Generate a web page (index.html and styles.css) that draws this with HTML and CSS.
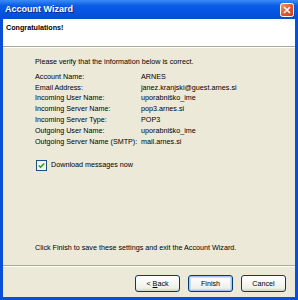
FILE: index.html
```html
<!DOCTYPE html>
<html lang="en">
<head>
    <meta charset="UTF-8">
    <title>Account Wizard</title>
    <link rel="stylesheet" href="styles.css">
</head>
<body>

<div class="window">
    <div class="titlebar">
        <span class="title">Account Wizard</span>
        <svg class="close" width="14" height="14" viewBox="0 0 14 14">
            <defs>
                <linearGradient id="closeFill" x1="0" y1="0" x2="1" y2="1">
                    <stop offset="0" stop-color="#f4a07c"/>
                    <stop offset="0.5" stop-color="#e2582f"/>
                    <stop offset="1" stop-color="#c9401a"/>
                </linearGradient>
            </defs>
            <rect x="0.5" y="0.5" width="13" height="13" rx="2" fill="url(#closeFill)" stroke="#fff"/>
            <path d="M4 4 L10 10 M10 4 L4 10" stroke="#fff" stroke-width="1.6"/>
        </svg>
    </div>

    <div class="frame">
        <!-- Header -->
        <div class="header">Congratulations!</div>

        <!-- Summary -->
        <div class="content">
            <p class="intro">Please verify that the information below is correct.</p>
            <div class="summary">
                <span>Account Name:</span><span>ARNES</span>
                <span>Email Address:</span><span>janez.kranjski@guest.arnes.si</span>
                <span>Incoming User Name:</span><span>uporabniško_ime</span>
                <span>Incoming Server Name:</span><span>pop3.arnes.si</span>
                <span>Incoming Server Type:</span><span>POP3</span>
                <span>Outgoing User Name:</span><span>uporabniško_ime</span>
                <span>Outgoing Server Name (SMTP):</span><span>mail.arnes.si</span>
            </div>
            <label class="check">
                <svg class="box" width="11" height="11" viewBox="0 0 11 11">
                    <rect x="0.5" y="0.5" width="10" height="10" fill="#f4f4ef" stroke="#1c5180"/>
                    <path d="M2.8 5.5 L4.6 7.3 L8.2 3.6" fill="none" stroke="#21a121" stroke-width="1.5"/>
                </svg>
                Download messages now
            </label>
            <p class="finish-note">Click Finish to save these settings and exit the Account Wizard.</p>
        </div>

        <!-- Buttons -->
        <div class="buttons">
            <button>&lt; <u>B</u>ack</button>
            <button class="default">Finish</button>
            <button>Cancel</button>
        </div>
    </div>
</div>

</body>
</html>
```

FILE: styles.css
```css
body {
    margin: 0;
    padding: 0;
    font-family: "Liberation Sans", Arial, sans-serif;
    font-size: 7.2px;
    line-height: 10.8px;
    color: #000;
}
.window {
    width: 298px;
    height: 300px;
    display: flex;
    flex-direction: column;
    background-color: #0a4fd8;
}
.titlebar {
    height: 19px;
    display: flex;
    align-items: center;
    justify-content: space-between;
    padding: 0 4px 0 5px;
    background: linear-gradient(#3a8cf8, #0a5ce6 30%, #0553e0 70%, #0a4bd0);
}
.title {
    color: white;
    font-weight: bold;
    font-size: 9px;
    text-shadow: 1px 1px 0 #0a2a8a;
}
.close {
    display: block;
}
.frame {
    flex: 1;
    display: flex;
    flex-direction: column;
    margin: 0 3px 3px 3px;
    background-color: #ece9d8;
}
.header {
    height: 28px;
    padding: 4px 0 0 3px;
    box-sizing: border-box;
    background-color: white;
    font-weight: bold;
    border-bottom: 1px solid #aca899;
}
.content {
    flex: 1;
    display: flex;
    flex-direction: column;
    padding: 9px 0 0 32px;
    border-top: 1px solid white;
}
.intro {
    margin: 0 0 4px 0;
}
.summary {
    display: grid;
    grid-template-columns: 106px auto;
}
.check {
    display: flex;
    align-items: center;
    gap: 4px;
    margin: 13px 0 0 1px;
}
.box {
    display: block;
}
.finish-note {
    margin: auto 0 11px 0;
}
.buttons {
    display: flex;
    justify-content: flex-end;
    gap: 8px;
    padding: 9px 9px 5px 0;
    border-top: 1px solid #aca899;
    box-shadow: inset 0 1px 0 white;
}
.buttons button {
    width: 45px;
    height: 17px;
    padding: 0;
    font-family: inherit;
    font-size: 7.2px;
    color: #000;
    background: linear-gradient(#fff, #f0f0ea 80%, #d6d0c5);
    border: 1px solid #003c74;
    border-radius: 3px;
}
.buttons button.default {
    box-shadow: inset 0 0 0 1px #a9c4f4, inset 0 0 0 2px #cddcf7;
}
```
